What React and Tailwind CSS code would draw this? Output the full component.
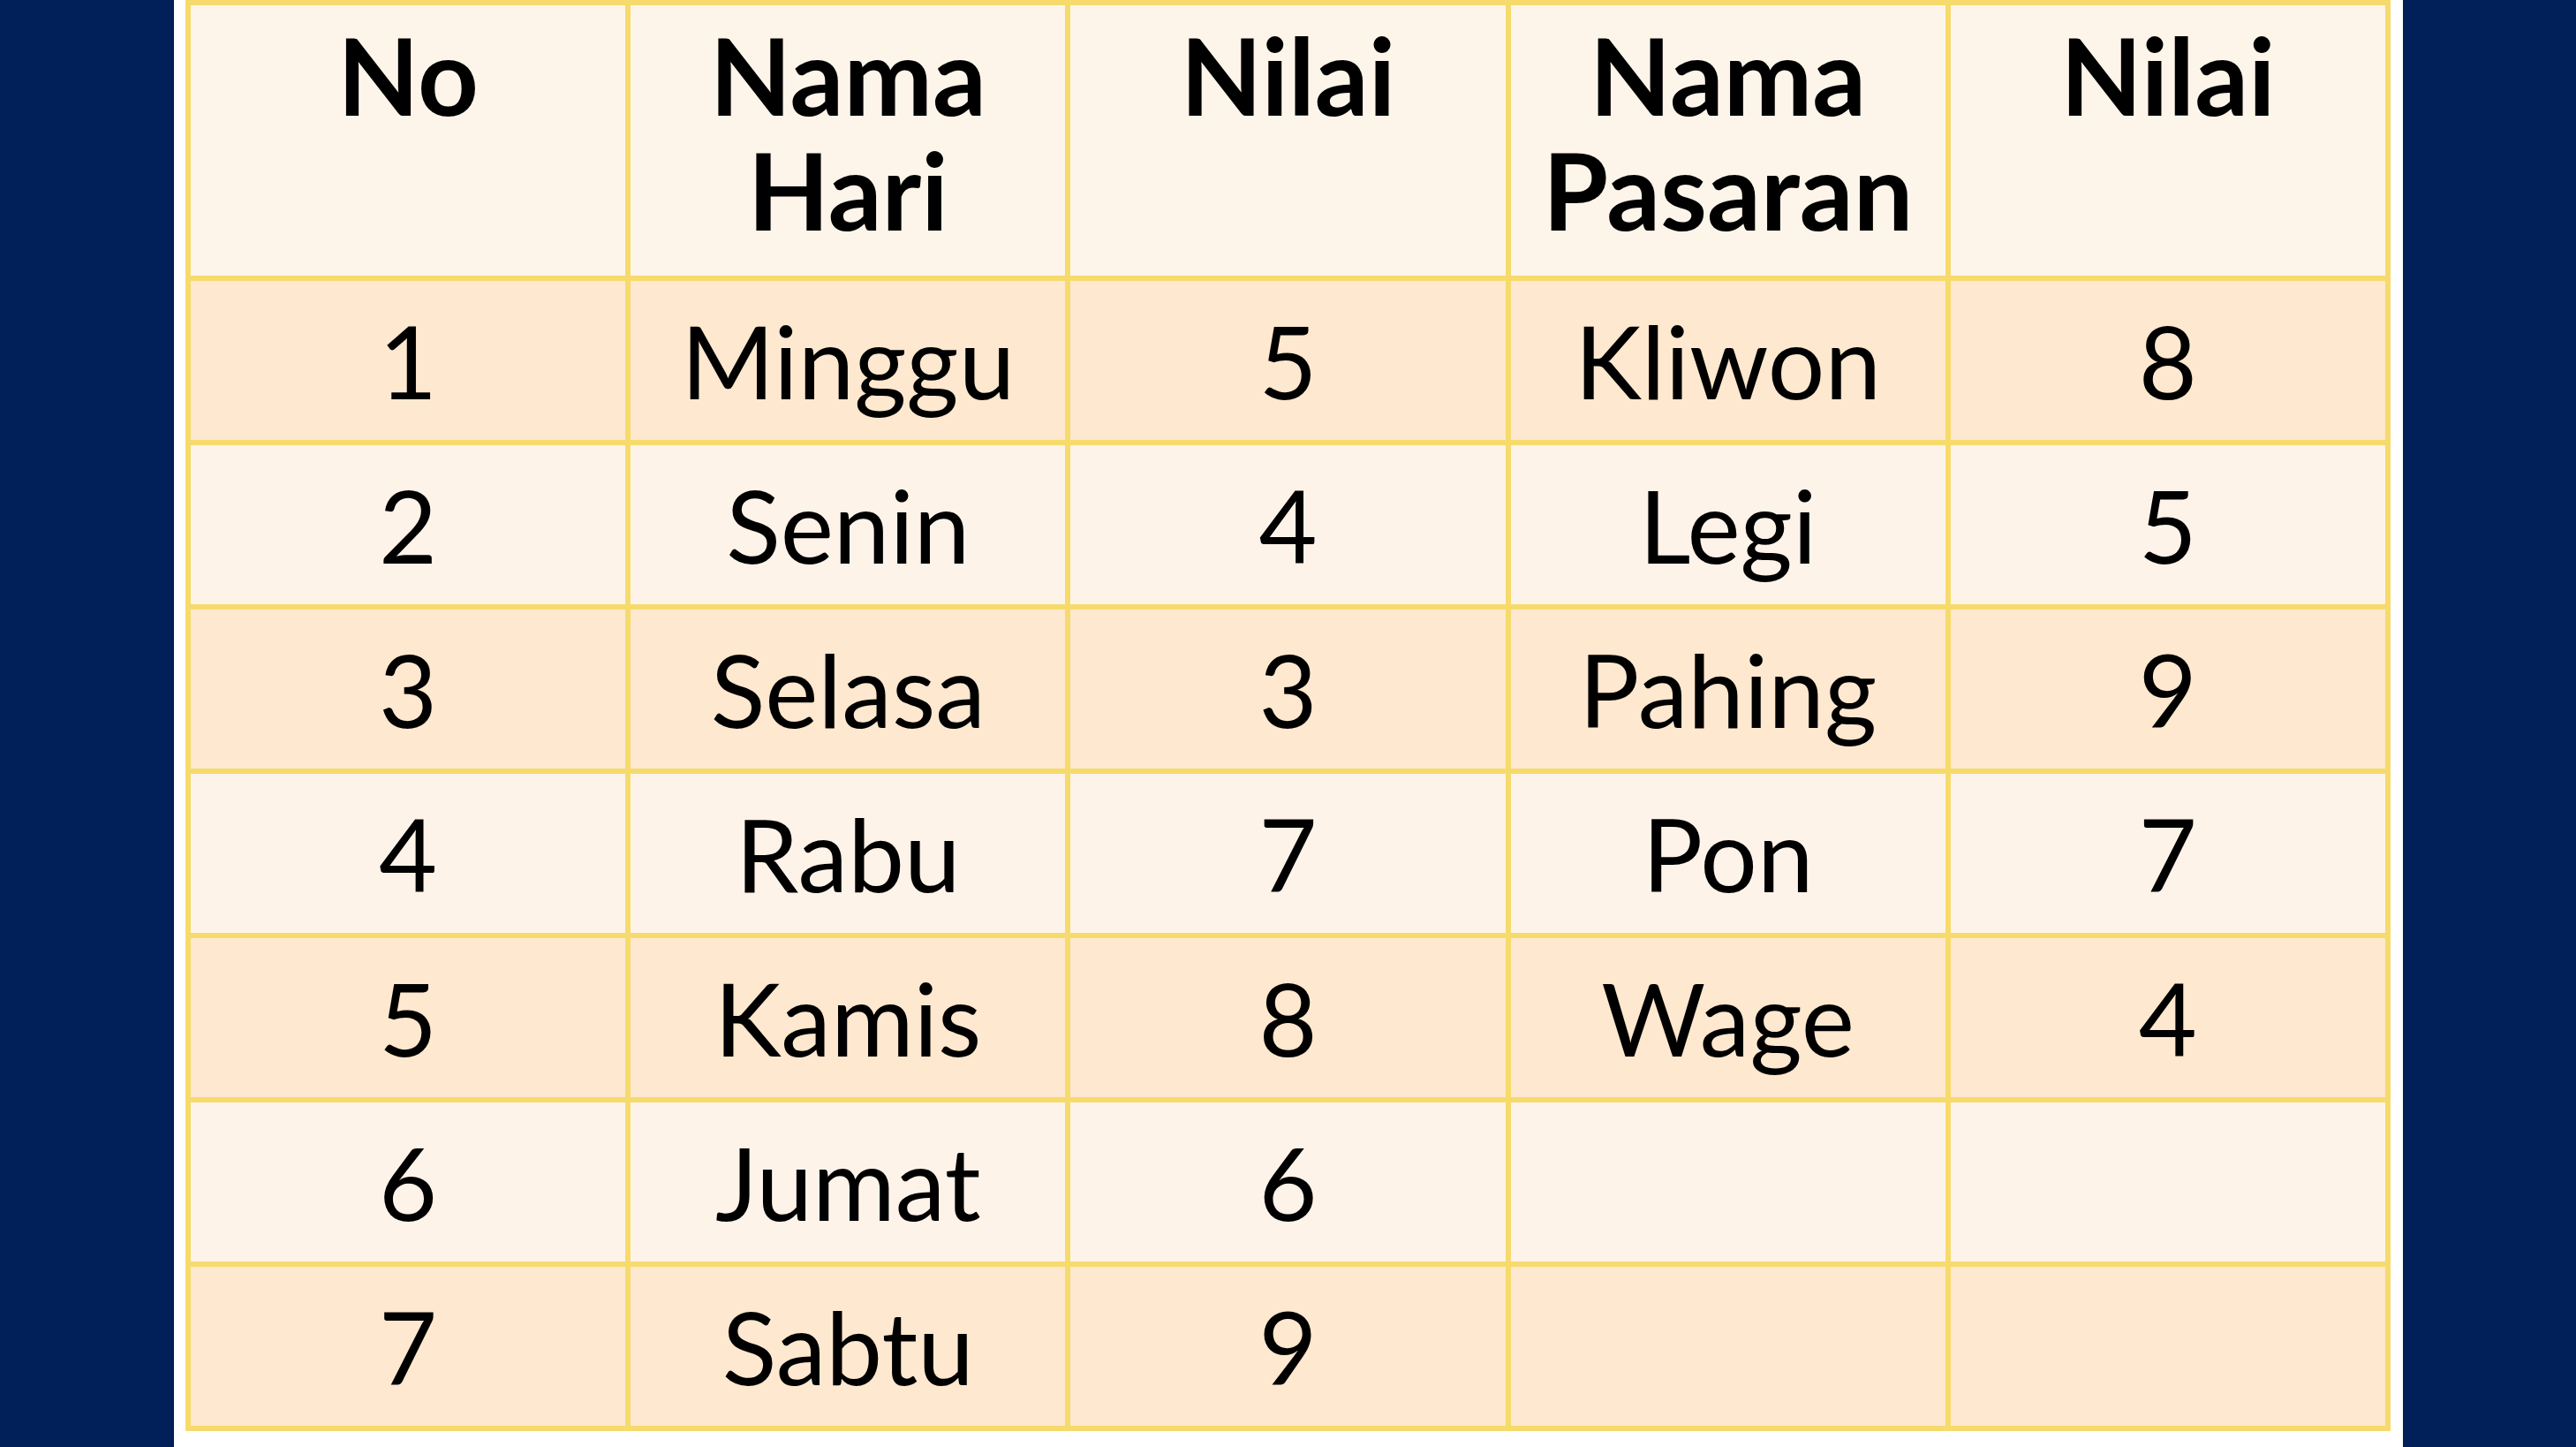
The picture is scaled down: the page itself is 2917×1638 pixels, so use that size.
import React from 'react'

const ROWS = [
  ['1', 'Minggu', '5', 'Kliwon', '8'],
  ['2', 'Senin', '4', 'Legi', '5'],
  ['3', 'Selasa', '3', 'Pahing', '9'],
  ['4', 'Rabu', '7', 'Pon', '7'],
  ['5', 'Kamis', '8', 'Wage', '4'],
  ['6', 'Jumat', '6', '', ''],
  ['7', 'Sabtu', '9', '', ''],
]

const HEADERS = [['No'], ['Nama', 'Hari'], ['Nilai'], ['Nama', 'Pasaran'], ['Nilai']]

export default function App() {
  return (
    <div
      className="w-full h-[1638px] bg-[#012059] flex overflow-hidden"
      style={{ fontFamily: '"Comic Sans MS", Lato, "Noto Sans", sans-serif' }}
    >
      <div className="ml-[197px] w-[2524px] h-full bg-white pl-[13px]">
        <table className="table-fixed border-collapse w-[2497px] text-black leading-[130px]">
          <thead>
            <tr className="h-[312px] bg-[#fef5ea]">
              {HEADERS.map((h, i) => (
                <th key={i} className="border-[6px] border-[#f6db6c] align-top pt-[14px] font-bold text-center text-[120px]">
                  {h.map(line => (
                    <div key={line}>{line}</div>
                  ))}
                </th>
              ))}
            </tr>
          </thead>
          <tbody>
            {ROWS.map((r, i) => (
              <tr key={i} className={`h-[186px] ${i % 2 === 0 ? 'bg-[#fee8cf]' : 'bg-[#fef3e9]'}`}>
                {r.map((c, j) => (
                  <td key={j} className="border-[6px] border-[#f6db6c] text-center align-middle text-[114px]">
                    {c}
                  </td>
                ))}
              </tr>
            ))}
          </tbody>
        </table>
      </div>
    </div>
  )
}
